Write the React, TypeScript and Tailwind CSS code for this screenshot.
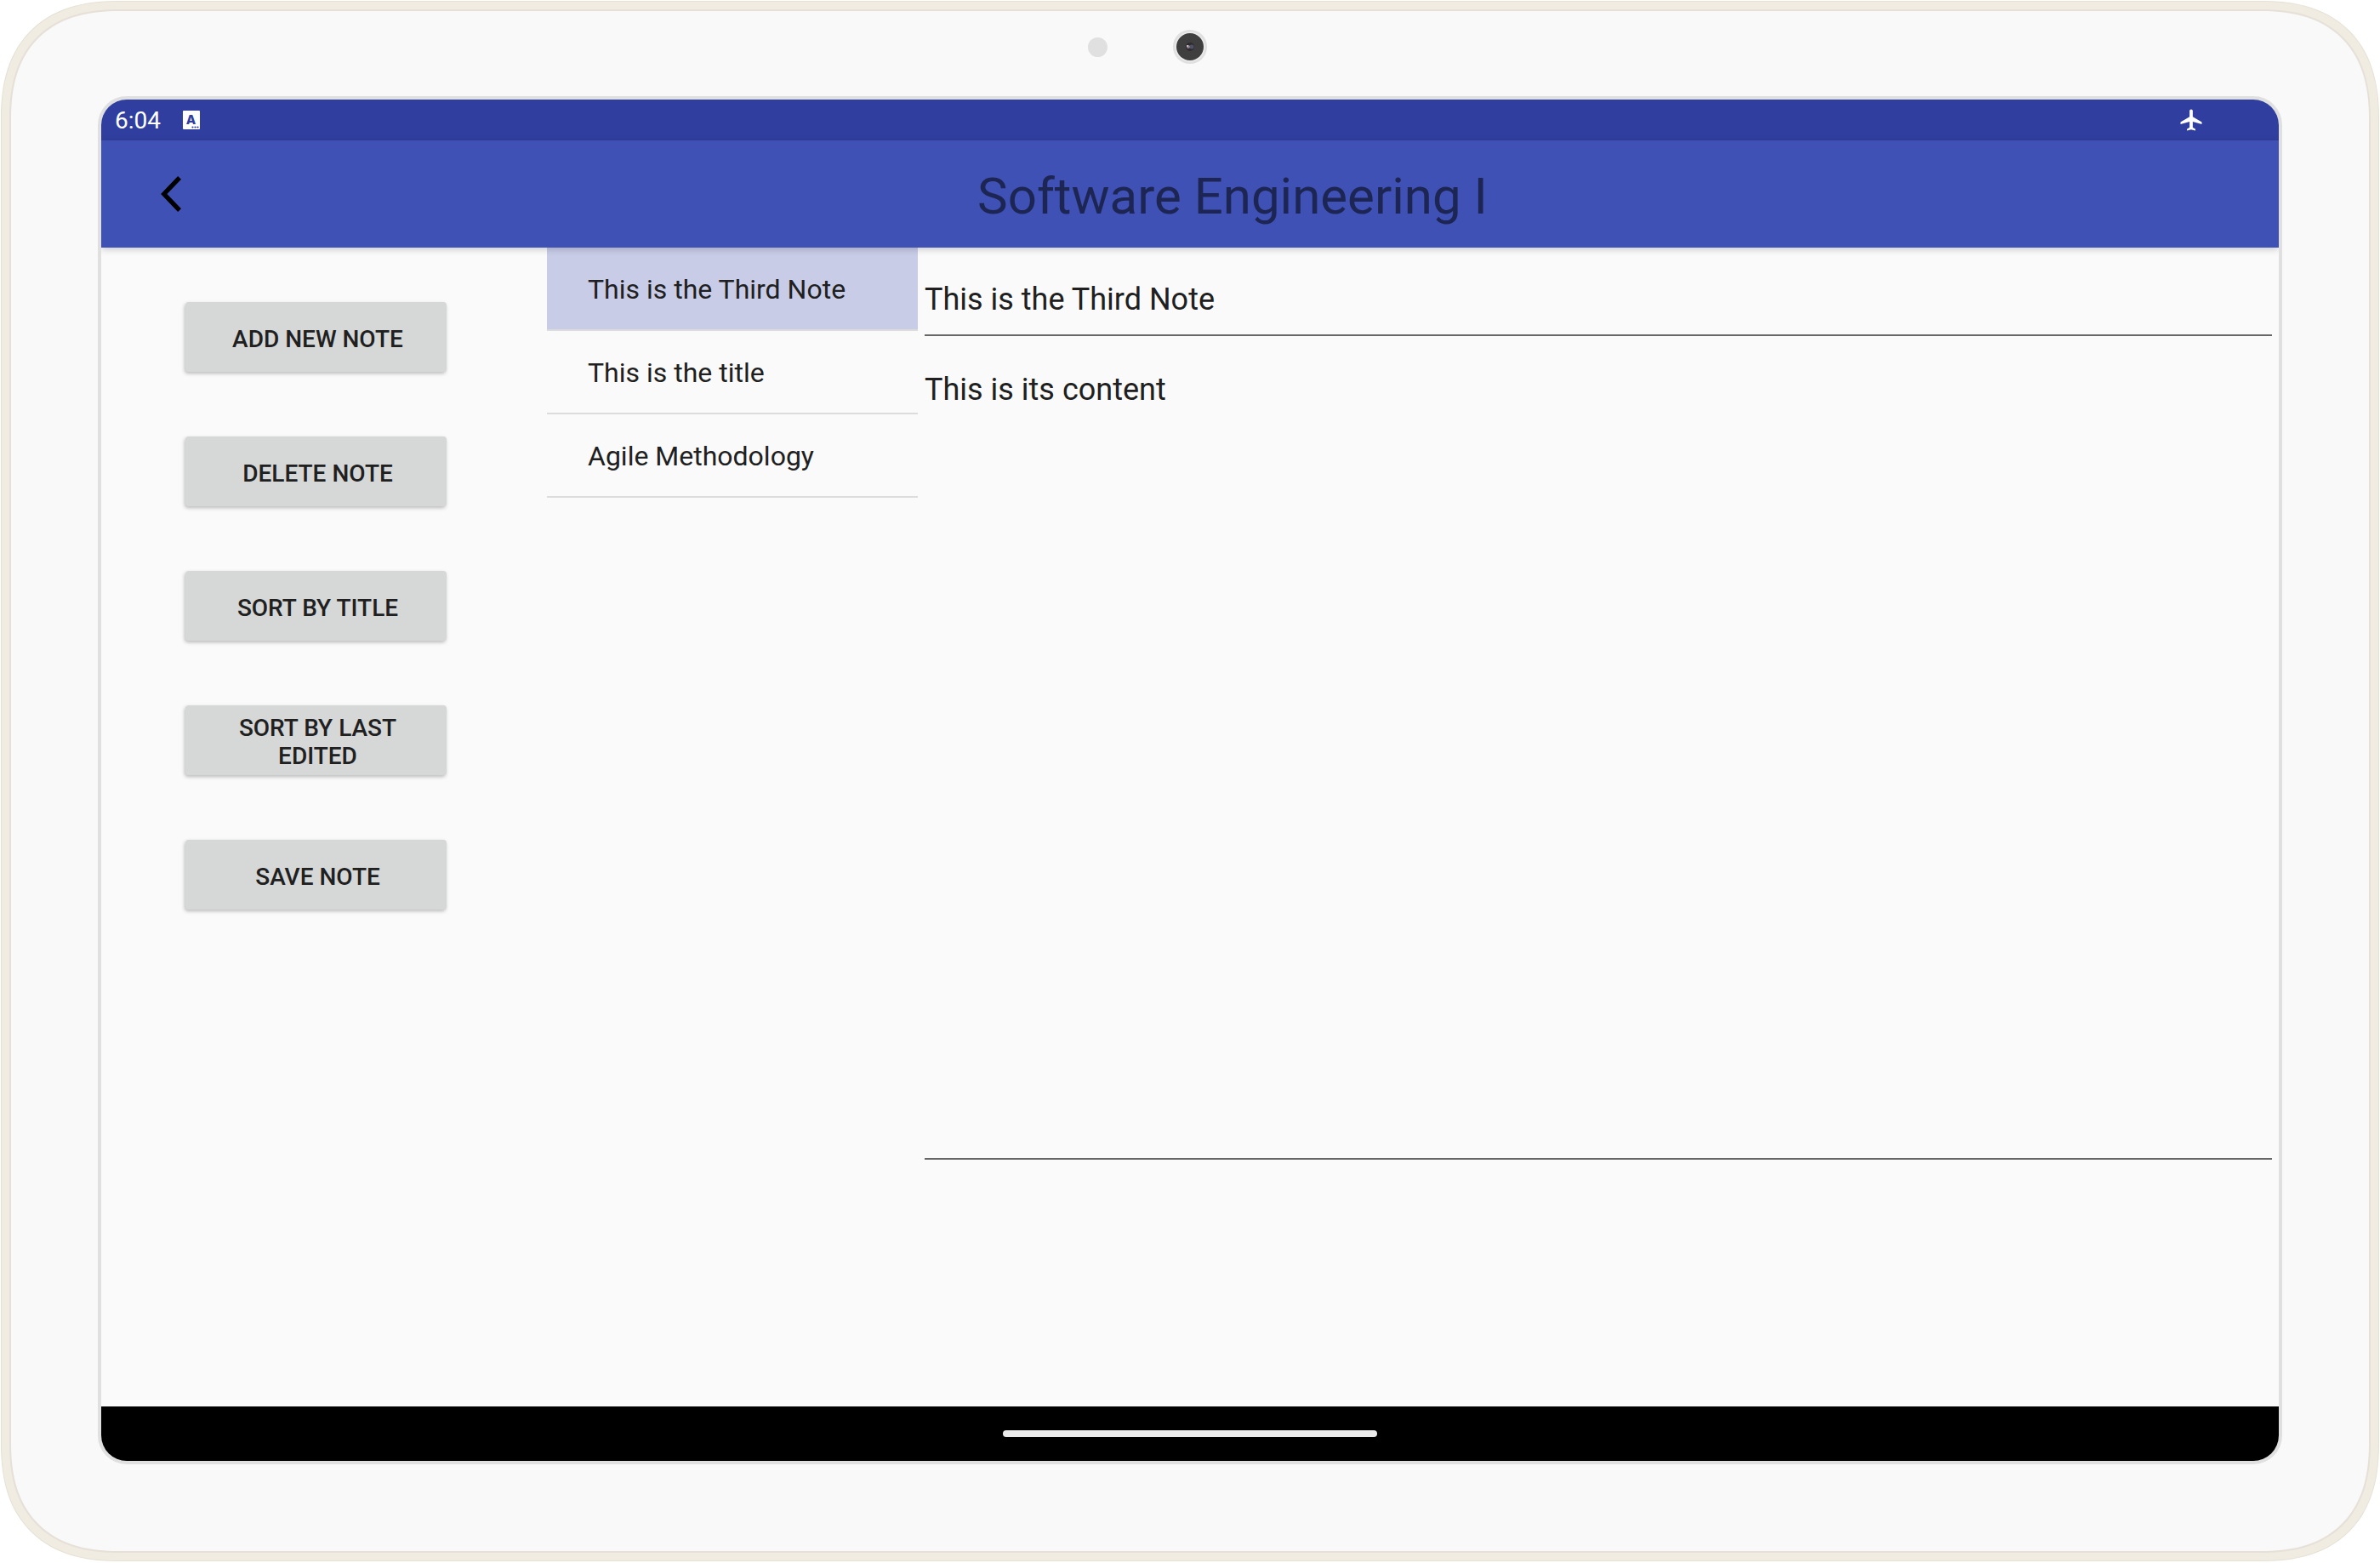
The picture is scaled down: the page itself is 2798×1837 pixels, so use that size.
import { useState } from "react";

const ACTIONS = ["Add new note", "Delete note", "Sort by title", "Sort by last edited", "Save note"];

const NOTES = ["This is the Third Note", "This is the title", "Agile Methodology"];

function KeyboardIcon() {
  return (
    <svg width="20" height="22" viewBox="0 0 20 22" aria-hidden="true">
      <rect width="20" height="22" rx="1" fill="#ffffff" />
      <text
        x="9.5"
        y="16"
        textAnchor="middle"
        fontFamily="Inter, sans-serif"
        fontWeight="800"
        fontSize="15"
        fill="#303f9f"
      >
        A
      </text>
      <circle cx="11.5" cy="19.5" r="1.1" fill="#303f9f" />
      <circle cx="14.5" cy="19.5" r="1.1" fill="#303f9f" />
      <circle cx="17.5" cy="19.5" r="1.1" fill="#303f9f" />
    </svg>
  );
}

function AirplaneIcon() {
  return (
    <svg width="30" height="30" viewBox="0 0 24 24" fill="#ffffff" aria-hidden="true">
      <path d="M22 16v-2l-8.5-5V3.5c0-.83-.67-1.5-1.5-1.5s-1.5.67-1.5 1.5V9L2 14v2l8.5-2.5V19L8 20.5V22l4-1 4 1v-1.5L13.5 19v-5.5L22 16z" />
    </svg>
  );
}

function BackIcon() {
  return (
    <svg width="24" height="42" viewBox="0 0 24 42" aria-hidden="true">
      <path d="M22.1 1.9 L3.8 21 L22.1 40.1" fill="none" stroke="#000000" strokeWidth="5.4" />
    </svg>
  );
}

function Camera() {
  return (
    <svg width="40" height="40" viewBox="0 0 40 40" aria-hidden="true">
      <circle cx="20" cy="20" r="20" fill="#e0e0e0" />
      <circle cx="20" cy="20" r="17.5" fill="#ebebeb" />
      <circle cx="20" cy="20" r="16" fill="#3f3f3f" />
      <circle cx="20" cy="20" r="5" fill="#2f2b30" />
      <circle cx="22" cy="20" r="2.5" fill="#4a5568" />
      <circle cx="18" cy="20" r="2" fill="#8f7f8a" />
      <circle cx="17" cy="19" r="1" fill="#d8d0d4" />
    </svg>
  );
}

function StatusBar() {
  return (
    <div className="flex h-12 items-center bg-[#303f9f] pr-[88px] pl-4 text-white">
      <span className="mr-[26px] pt-0.5 text-[28px] leading-8">6:04</span>
      <KeyboardIcon />
      <span className="ml-auto">
        <AirplaneIcon />
      </span>
    </div>
  );
}

function Toolbar() {
  return (
    <header className="relative z-10 flex h-[126px] items-center bg-[#3f51b5] shadow-[0_2px_8px_rgba(0,0,0,0.2)]">
      <button type="button" aria-label="Back" className="flex h-full w-[100px] items-center justify-end pr-1.5">
        <BackIcon />
      </button>
      <h1 className="flex-1 pt-1.5 text-center text-[60px] leading-[72px] text-[#1d2553]">Software Engineering I</h1>
    </header>
  );
}

export default function App() {
  const [selected, setSelected] = useState(0);
  const [title, setTitle] = useState("This is the Third Note");
  const [content, setContent] = useState("This is its content");

  return (
    <div className="flex min-h-screen bg-white px-px pt-px pb-0.5 font-['Roboto',sans-serif] text-[#202020]">
      <div className="flex flex-1 rounded-[140px] border border-[#e6e1d5] bg-[#f0ece1] p-[9px] [corner-shape:superellipse(1.27)]">
        <div className="flex flex-1 flex-col rounded-[130px] border-2 border-[#e6e0d8] bg-[#f9f9f9] px-[102px] pb-[102px] [corner-shape:superellipse(1.27)]">
          <div className="grid h-[100px] grid-cols-[1fr_40px_1fr] items-center pb-4">
            <span className="mr-[77px] size-[23px] justify-self-end rounded-full bg-[#e0e0e0]" />
            <Camera />
          </div>

          <div className="flex flex-1 flex-col overflow-hidden rounded-[34px] border-4 border-[#e0e0e0] bg-[#fafafa]">
            <StatusBar />
            <Toolbar />

            <main className="flex flex-1">
              <nav className="flex w-[524px] flex-col gap-[76px] pt-16 pr-[118px] pl-[99px]">
                {ACTIONS.map((label) => (
                  <button
                    key={label}
                    type="button"
                    className="h-[82px] rounded bg-[#d6d7d7] pt-1 pr-5 pl-6 text-[28px] leading-[33px] font-medium uppercase shadow-[-1px_2px_4px_rgba(0,0,0,0.26)]"
                  >
                    {label}
                  </button>
                ))}
              </nav>

              <ul className="w-[436px]">
                {NOTES.map((note, i) => (
                  <li key={note} className="border-b-2 border-[#dcdcdc]">
                    <button
                      type="button"
                      onClick={() => setSelected(i)}
                      className={
                        i === selected
                          ? "h-24 w-full bg-[#c8cce7] px-12 pt-0.5 text-left text-[32px]"
                          : "h-24 w-full px-12 pt-0.5 text-left text-[32px]"
                      }
                    >
                      {note}
                    </button>
                  </li>
                ))}
              </ul>

              <section className="flex flex-1 flex-col px-2 pb-[290px]">
                <input
                  aria-label="Note title"
                  value={title}
                  onChange={(e) => setTitle(e.target.value)}
                  className="h-[104px] border-b-2 border-[#666666] bg-transparent pt-10 pb-5 text-4xl leading-[42px] outline-none"
                />
                <textarea
                  aria-label="Note content"
                  value={content}
                  onChange={(e) => setContent(e.target.value)}
                  className="flex-1 resize-none border-b-2 border-[#666666] bg-transparent pt-[42px] text-4xl leading-[42px] outline-none"
                />
              </section>
            </main>

            <footer className="flex h-16 items-center justify-center bg-black">
              <div className="h-2 w-[440px] rounded-full bg-[#ebebeb]" />
            </footer>
          </div>
        </div>
      </div>
    </div>
  );
}
